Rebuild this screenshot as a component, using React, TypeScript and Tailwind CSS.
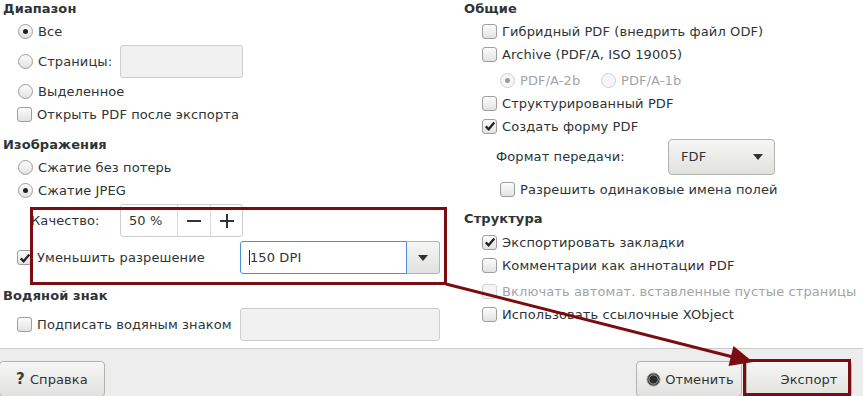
import React from "react";

// ================================
// PDF export dialog (annotated)
// ================================

const red = "#7b0d12";

function CheckBox({ checked = false, disabled = false }: { checked?: boolean; disabled?: boolean }) {
  return (
    <span
      className={`w-[15px] h-[15px] shrink-0 rounded-[3px] border flex items-center justify-center ${
        disabled
          ? "border-[#d2d2d2] bg-[#f4f4f4]"
          : "border-[#9e9e9e] bg-gradient-to-b from-[#fcfcfc] to-[#e2e2e2]"
      }`}
    >
      {checked && (
        <svg width="12" height="12" viewBox="0 0 12 12">
          <path d="M1.8 6.4 L4.6 9.2 L10.3 2.6" fill="none" stroke="#222" strokeWidth="2.3" />
        </svg>
      )}
    </span>
  );
}

function Radio({ checked = false, disabled = false }: { checked?: boolean; disabled?: boolean }) {
  return (
    <span
      className={`w-[15px] h-[15px] shrink-0 rounded-full border flex items-center justify-center ${
        disabled
          ? "border-[#cfcfcf] bg-[#f6f6f6]"
          : "border-[#9e9e9e] bg-gradient-to-b from-[#fcfcfc] to-[#e2e2e2]"
      }`}
    >
      {checked && (
        <span className={`w-[5px] h-[5px] rounded-full ${disabled ? "bg-[#9a9a9a]" : "bg-[#222]"}`} />
      )}
    </span>
  );
}

function Option({
  kind,
  label,
  checked,
  disabled,
  className = "",
}: {
  kind: "check" | "radio";
  label: string;
  checked?: boolean;
  disabled?: boolean;
  className?: string;
}) {
  return (
    <div className={`h-[22px] flex items-center gap-[5px] ${className}`}>
      {kind === "check" ? (
        <CheckBox checked={checked} disabled={disabled} />
      ) : (
        <Radio checked={checked} disabled={disabled} />
      )}
      <span className={`whitespace-nowrap ${disabled ? "text-[#a2a5a6]" : ""}`}>{label}</span>
    </div>
  );
}

function Heading({ children, className = "" }: { children: React.ReactNode; className?: string }) {
  return <div className={`h-4 flex items-center font-bold leading-none ${className}`}>{children}</div>;
}

function ArrowDown() {
  return (
    <svg width="10" height="6" viewBox="0 0 10 6">
      <path d="M0 0 L10 0 L5 6 Z" fill="#2e3436" />
    </svg>
  );
}

const buttonBase =
  "h-[36px] rounded-[4px] border border-[#b3b3b0] bg-gradient-to-b from-[#f6f6f5] to-[#e1e1df] flex items-center";

export default function App() {
  return (
    <div
      className="relative w-[863px] h-[396px] overflow-hidden bg-white text-[13px] text-[#2e3436] leading-none tracking-[0.1px]"
      style={{ fontFamily: '"DejaVu Sans", sans-serif' }}
    >
      <div className="flex h-[348px]">
        {/* Left column */}
        <div className="w-[460px] flex flex-col">
          <Heading className="pl-[3px]">Диапазон</Heading>
          <Option kind="radio" label="Все" checked className="mt-1 pl-[18px]" />
          <div className="mt-[3px] h-[33px] flex items-center pl-[18px]">
            <div className="w-[102px] flex items-center gap-[5px]">
              <Radio />
              <span>Страницы:</span>
            </div>
            <div className="w-[123px] h-[33px] rounded-[3px] border border-[#cdcdcd] bg-[#f1f1f1]" />
          </div>
          <Option kind="radio" label="Выделенное" className="mt-[2px] pl-[18px]" />
          <Option kind="check" label="Открыть PDF после экспорта" className="mt-[1px] pl-[17px]" />

          <Heading className="mt-[11px] pl-[3px]">Изображения</Heading>
          <Option kind="radio" label="Сжатие без потерь" className="mt-1 pl-[18px]" />
          <Option kind="radio" label="Сжатие JPEG" checked className="mt-[1px] pl-[18px]" />
          <div className="mt-[3px] h-[33px] flex items-center pl-[31px]">
            <span className="w-[89px]">Качество:</span>
            <div className="w-[123px] h-[33px] rounded-[3px] border border-[#cdcdcd] bg-white flex">
              <span className="w-[56px] flex items-center pl-[8px]">50 %</span>
              <span className="w-[33px] border-l border-[#dcdcdc] flex items-center justify-center">
                <span className="w-[14px] h-[2px] bg-[#2e3436]" />
              </span>
              <span className="flex-1 border-l border-[#dcdcdc] flex items-center justify-center relative">
                <span className="w-[14px] h-[2px] bg-[#2e3436]" />
                <span className="absolute w-[2px] h-[14px] bg-[#2e3436]" />
              </span>
            </div>
          </div>
          <div className="mt-1 h-[33px] flex items-center pl-[17px]">
            <div className="w-[223px] flex items-center gap-[5px]">
              <CheckBox checked />
              <span>Уменьшить разрешение</span>
            </div>
            <div className="w-[167px] h-[33px] rounded-l-[3px] border border-[#4a90d9] bg-white flex items-center pl-[8px]">
              <span className="w-px h-[15px] bg-[#2e3436]" />
              <span>150 DPI</span>
            </div>
            <div className="w-[33px] h-[33px] rounded-r-[3px] border border-l-0 border-[#b3b3b0] bg-gradient-to-b from-[#f6f6f5] to-[#e1e1df] flex items-center justify-center">
              <ArrowDown />
            </div>
          </div>

          <Heading className="mt-[13px] pl-[3px]">Водяной знак</Heading>
          <div className="mt-[5px] h-[33px] flex items-center pl-[17px]">
            <div className="w-[223px] flex items-center gap-[5px]">
              <CheckBox />
              <span>Подписать водяным знаком</span>
            </div>
            <div className="w-[200px] h-[33px] rounded-[3px] border border-[#cdcdcd] bg-[#f1f1f1]" />
          </div>
        </div>

        {/* Right column */}
        <div className="flex-1 flex flex-col">
          <Heading className="pl-[4px]">Общие</Heading>
          <Option kind="check" label="Гибридный PDF (внедрить файл ODF)" className="mt-1 pl-[22px]" />
          <Option kind="check" label="Archive (PDF/A, ISO 19005)" className="mt-[1px] pl-[22px]" />
          <div className="mt-1 h-[22px] flex items-center pl-[40px]">
            <Option kind="radio" label="PDF/A-2b" checked disabled className="w-[101px]" />
            <Option kind="radio" label="PDF/A-1b" disabled />
          </div>
          <Option kind="check" label="Структурированный PDF" className="mt-[1px] pl-[22px]" />
          <Option kind="check" label="Создать форму PDF" checked className="mt-[1px] pl-[22px]" />
          <div className="mt-[3px] h-[33px] flex items-center pl-[36px]">
            <span className="w-[172px]">Формат передачи:</span>
            <div className={`${buttonBase} h-[33px] w-[107px] justify-between pl-[12px] pr-[11px]`}>
              <span>FDF</span>
              <ArrowDown />
            </div>
          </div>
          <Option kind="check" label="Разрешить одинаковые имена полей" className="mt-[5px] pl-[40px]" />

          <Heading className="mt-[10px] pl-[4px]">Структура</Heading>
          <Option kind="check" label="Экспортировать закладки" checked className="mt-[5px] pl-[22px]" />
          <Option kind="check" label="Комментарии как аннотации PDF" className="mt-[1px] pl-[22px]" />
          <Option
            kind="check"
            label="Включать автомат. вставленные пустые страницы"
            disabled
            className="mt-1 pl-[22px]"
          />
          <Option kind="check" label="Использовать ссылочные XObject" className="mt-[1px] pl-[22px]" />
        </div>
      </div>

      {/* Footer */}
      <div className="h-[48px] border-t border-[#cbcbcb] bg-[#ededed] flex items-start pt-[12px]">
        <div className={`${buttonBase} w-[106px] -ml-px justify-center gap-[5px]`}>
          <span className="font-bold text-[15px] text-[#3a3a3a]">?</span>
          <span>Справка</span>
        </div>
        <div className="flex-1" />
        <div className={`${buttonBase} w-[106px] justify-center gap-[4px] pl-[2px]`}>
          <svg width="15" height="15" viewBox="0 0 15 15">
            <circle cx="7.5" cy="7.5" r="6.5" fill="#3a3a3a" stroke="#9a9a9a" strokeWidth="1" />
            <circle cx="7.5" cy="7.5" r="4.6" fill="#2a2a2a" stroke="#bdbdbd" strokeWidth="0.8" />
          </svg>
          <span>Отменить</span>
        </div>
        <div className={`${buttonBase} w-[106px] ml-[4px] mr-[11px] justify-center pl-[20px]`}>
          <span>Экспорт</span>
        </div>
      </div>

      {/* Annotation overlay */}
      <div className="absolute left-[30px] top-[207px] w-[417px] h-[78px] border-[3px] border-[#7b0d12] pointer-events-none" />
      <div className="absolute left-[743px] top-[359px] w-[108px] h-[37px] border-[3px] border-[#7b0d12] pointer-events-none" />
      <svg className="absolute left-0 top-0 pointer-events-none" width="863" height="396">
        <line x1="446" y1="284" x2="733" y2="357" stroke={red} strokeWidth="3" />
        <path d="M753 362 L728.5 366 L733.5 346 Z" fill={red} />
      </svg>
    </div>
  );
}
